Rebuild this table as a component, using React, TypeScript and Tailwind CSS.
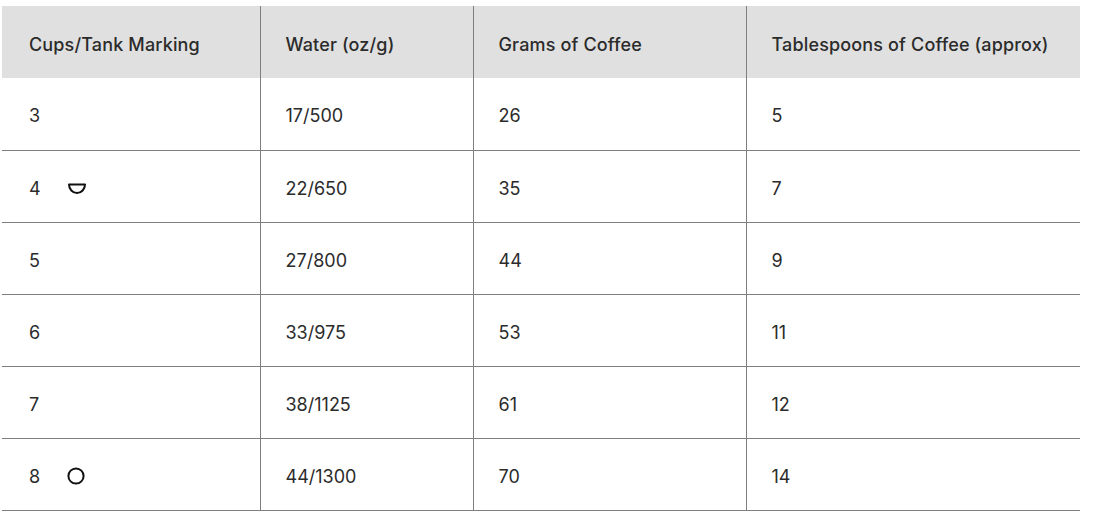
const rows: { cups: string; mark?: 'half' | 'full'; water: string; grams: string; tbsp: string }[] = [
  { cups: '3', water: '17/500', grams: '26', tbsp: '5' },
  { cups: '4', mark: 'half', water: '22/650', grams: '35', tbsp: '7' },
  { cups: '5', water: '27/800', grams: '44', tbsp: '9' },
  { cups: '6', water: '33/975', grams: '53', tbsp: '11' },
  { cups: '7', water: '38/1125', grams: '61', tbsp: '12' },
  { cups: '8', mark: 'full', water: '44/1300', grams: '70', tbsp: '14' },
];

function HalfMark() {
  return (
    <svg width="20" height="12" viewBox="0 0 20 12" className="ml-[26px] mt-[2px]">
      <path d="M2 1.5 H18 A8 8.5 0 0 1 2 1.5 Z" fill="none" stroke="#111" strokeWidth="2" strokeLinejoin="round" />
    </svg>
  );
}

function FullMark() {
  return (
    <svg width="18" height="18" viewBox="0 0 18 18" className="ml-[27px] mb-[1px]">
      <circle cx="9" cy="9" r="7.6" fill="none" stroke="#111" strokeWidth="2" />
    </svg>
  );
}

export default function App() {
  return (
    <div className="bg-white pl-[2px] pt-[6px] h-[525px] font-['Inter',sans-serif] text-[#2b2b2b]">
      <table className="w-[1078px] border-collapse table-fixed">
        <colgroup>
          <col className="w-[258px]" />
          <col className="w-[213px]" />
          <col className="w-[273px]" />
          <col className="w-[334px]" />
        </colgroup>
        <thead>
          <tr className="h-[72px] text-[18px] tracking-[0.15px]">
            <th className="bg-[#e0e0e0] border-r border-[#7f7f7f] text-left font-medium pt-[4px] pl-[27px]">Cups/Tank Marking</th>
            <th className="bg-[#e0e0e0] border-r border-[#7f7f7f] text-left font-medium pt-[4px] pl-[25px]">Water (oz/g)</th>
            <th className="bg-[#e0e0e0] border-r border-[#7f7f7f] text-left font-medium pt-[4px] pl-[25px]">Grams of Coffee</th>
            <th className="bg-[#e0e0e0] text-left font-medium pt-[4px] pl-[25px]">Tablespoons of Coffee (approx)</th>
          </tr>
        </thead>
        <tbody>
          {rows.map((r) => (
            <tr key={r.cups} className="h-[72px] border-b border-[#7f7f7f] text-[18px]">
              <td className="border-r border-[#7f7f7f] pt-[4px] pl-[27px]">
                <div className="flex items-center">
                  <span>{r.cups}</span>
                  {r.mark === 'half' && <HalfMark />}
                  {r.mark === 'full' && <FullMark />}
                </div>
              </td>
              <td className="border-r border-[#7f7f7f] pt-[4px] pl-[25px]">{r.water}</td>
              <td className="border-r border-[#7f7f7f] pt-[4px] pl-[25px]">{r.grams}</td>
              <td className="pt-[4px] pl-[25px]">{r.tbsp}</td>
            </tr>
          ))}
        </tbody>
      </table>
    </div>
  );
}
